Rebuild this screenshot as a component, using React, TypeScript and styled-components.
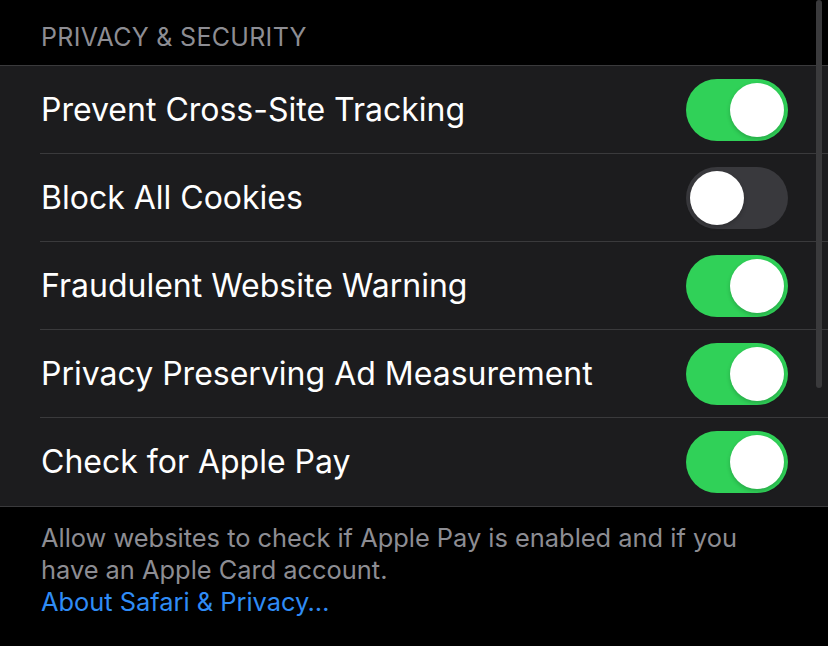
import React from "react";
import styled, { createGlobalStyle } from "styled-components";

const Global = createGlobalStyle`
  html, body { margin: 0; padding: 0; background: #000; }
  body { font-family: Inter, "Liberation Sans", sans-serif; -webkit-font-smoothing: antialiased; }
`;

const Page = styled.div`
  position: relative;
  width: 828px;
  height: 646px;
  background: #000;
  overflow: hidden;
`;

const SectionHeader = styled.div`
  height: 66px;
  box-sizing: border-box;
  padding: 22px 0 0 41px;
  color: #8d8d93;
  font-size: 25px;
  letter-spacing: 0.3px;
  border-bottom: 1px solid #3a3a3c;
`;

const Group = styled.div`
  background: #1c1c1e;
`;

const Row = styled.div<{ $last?: boolean }>`
  display: flex;
  align-items: center;
  justify-content: space-between;
  height: 88px;
  margin-left: 40px;
  padding-right: 40px;
  box-sizing: border-box;
  border-bottom: 1px solid ${(p) => (p.$last ? "transparent" : "#3a3a3c")};
`;

const Label = styled.span`
  color: #fff;
  font-size: 32px;
  padding-left: 1px;
`;

const Track = styled.div<{ $on: boolean }>`
  width: 102px;
  height: 62px;
  border-radius: 31px;
  background: ${(p) => (p.$on ? "#30d158" : "#39393d")};
  display: flex;
  align-items: center;
  justify-content: ${(p) => (p.$on ? "flex-end" : "flex-start")};
  padding: 0 4px;
  box-sizing: border-box;
`;

const Knob = styled.div`
  width: 54px;
  height: 54px;
  border-radius: 50%;
  background: #fff;
  box-shadow: 0 2px 4px rgba(0, 0, 0, 0.2);
`;

const Footer = styled.div`
  border-top: 1px solid #3a3a3c;
  padding: 15px 60px 0 41px;
  color: #8d8d93;
  font-size: 25.4px;
  line-height: 32px;
`;

const Link = styled.div`
  color: #2f8cf6;
`;

const Scroll = styled.div`
  position: absolute;
  right: 6px;
  top: 0;
  width: 6px;
  height: 388px;
  border-radius: 3px;
  background: #3a3a3c;
`;

const rows: [string, boolean][] = [
  ["Prevent Cross-Site Tracking", true],
  ["Block All Cookies", false],
  ["Fraudulent Website Warning", true],
  ["Privacy Preserving Ad Measurement", true],
  ["Check for Apple Pay", true],
];

export default function App() {
  return (
    <Page>
      <Global />
      <SectionHeader>PRIVACY &amp; SECURITY</SectionHeader>
      <Group>
        {rows.map(([label, on], i) => (
          <Row key={label} $last={i === rows.length - 1}>
            <Label>{label}</Label>
            <Track $on={on}>
              <Knob />
            </Track>
          </Row>
        ))}
      </Group>
      <Footer>
        Allow websites to check if Apple Pay is enabled and if you have an Apple Card account.
        <Link>About Safari &amp; Privacy…</Link>
      </Footer>
      <Scroll />
    </Page>
  );
}
